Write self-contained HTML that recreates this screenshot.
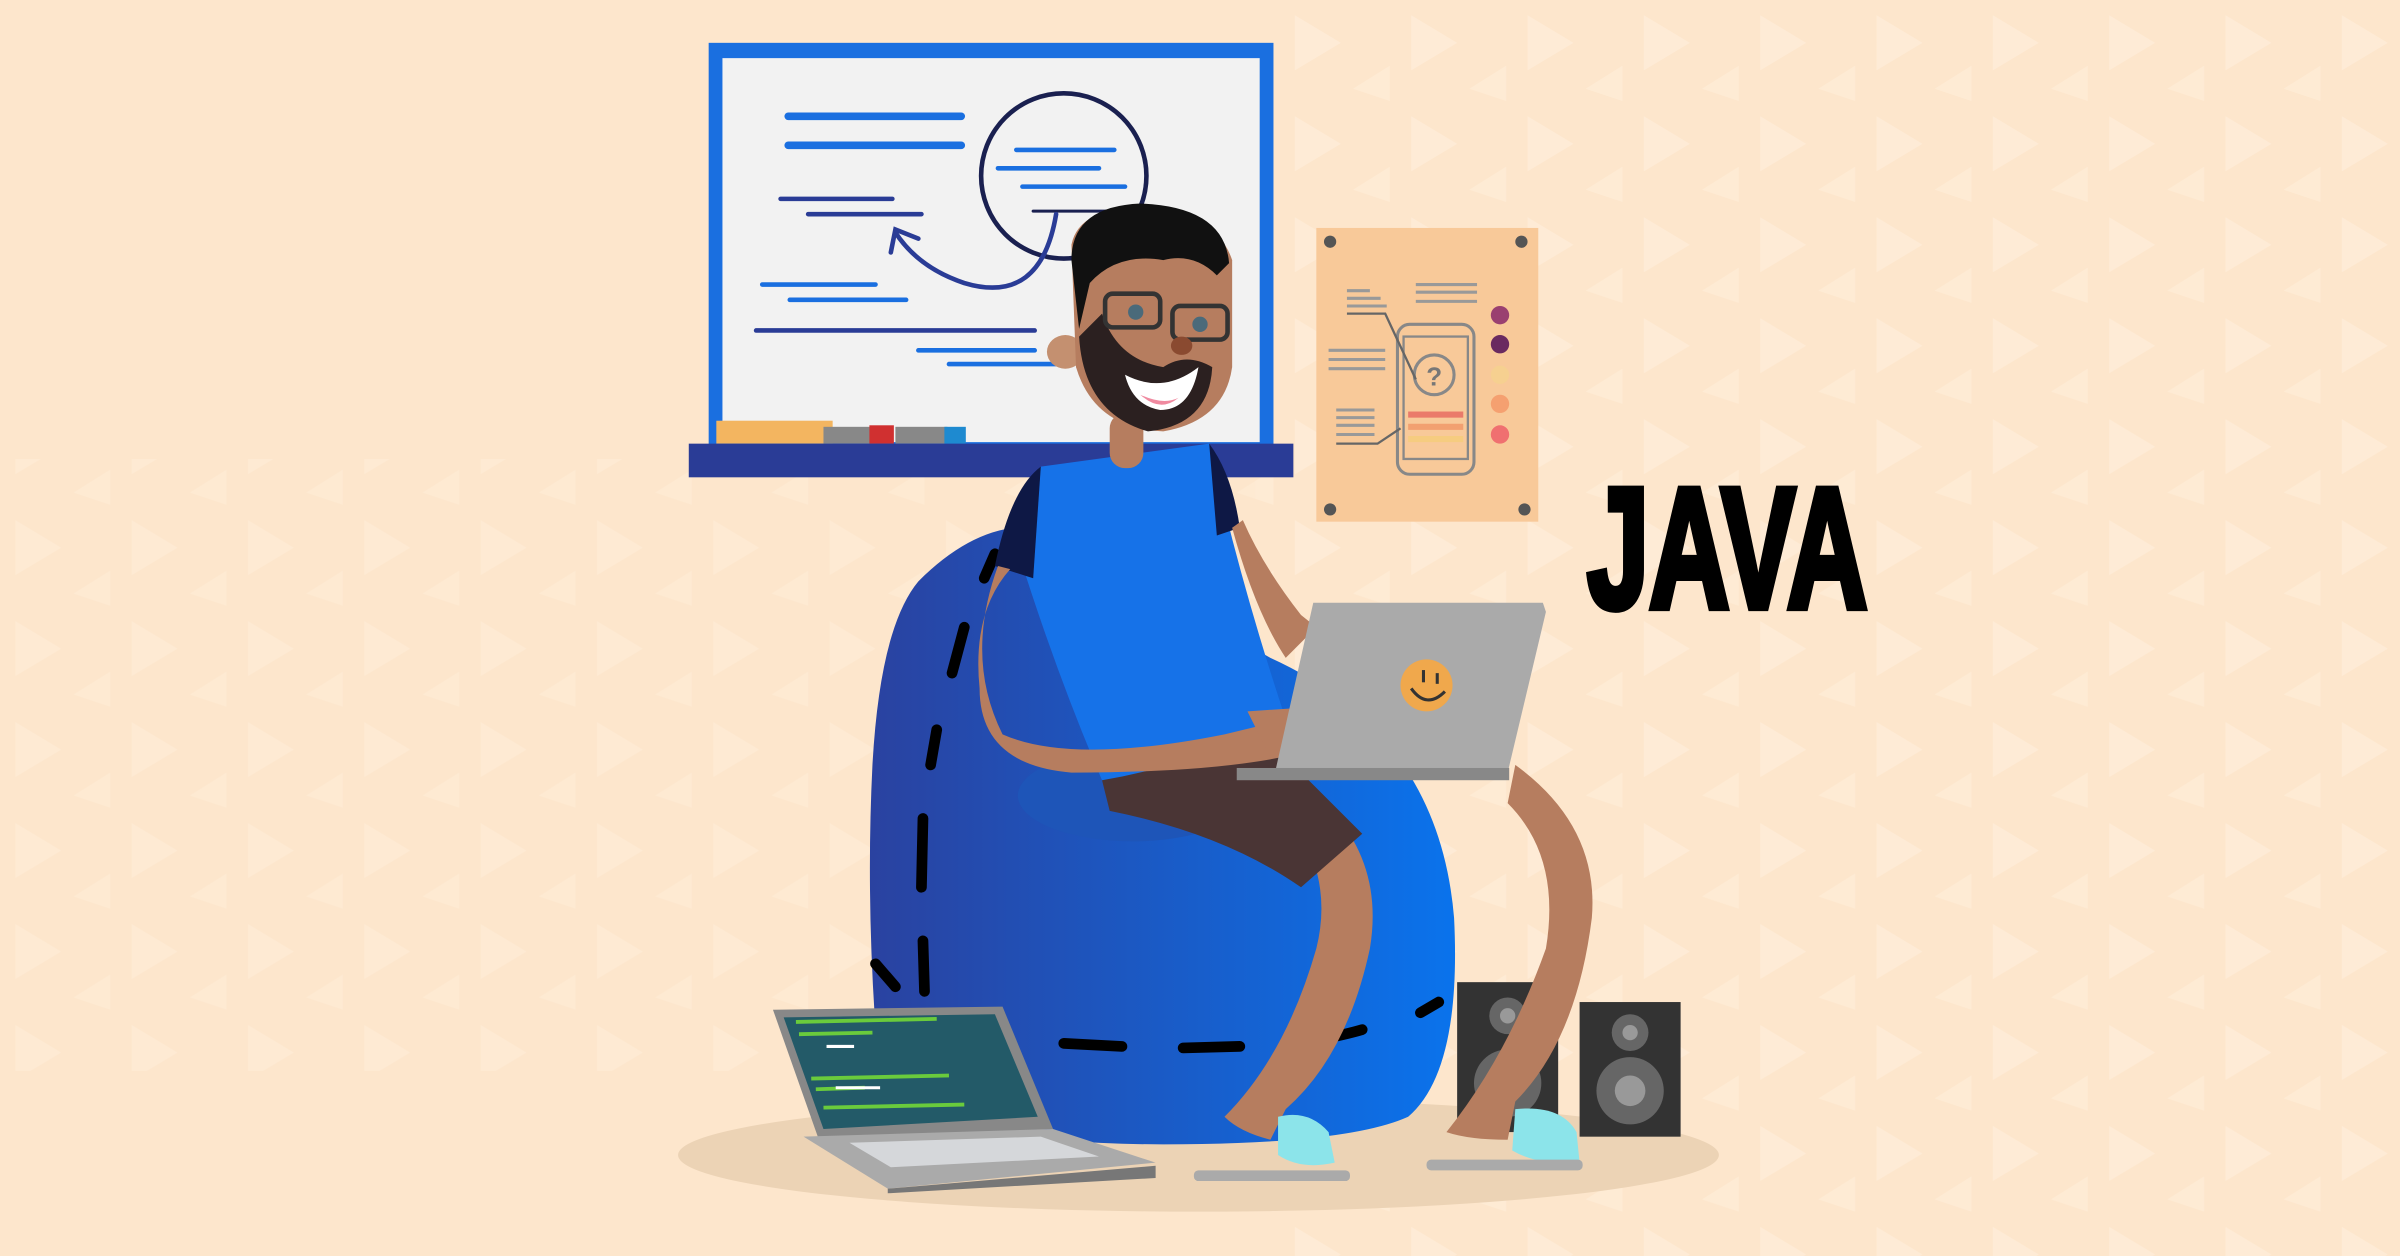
<!DOCTYPE html>
<html><head><meta charset="utf-8"><style>
html,body{margin:0;padding:0;width:2400px;height:1256px;overflow:hidden;background:#fde6cc}
svg{display:block}
.java{font-family:"Liberation Sans",Arial,sans-serif;font-weight:700}
</style></head><body>
<svg width="2400" height="1256" viewBox="0 0 1568 821" preserveAspectRatio="none" xmlns="http://www.w3.org/2000/svg">
<defs>
<pattern id="tri" width="76" height="66" patternUnits="userSpaceOnUse">
<path d="M10 10 L40 28 L10 46 Z" fill="#fff2e2" opacity="0.45"/>
<path d="M72 43 L48 58 L72 66Z" fill="#fff2e2" opacity="0.4"/>
</pattern>
<linearGradient id="bag" x1="0" x2="1" y1="0" y2="0">
<stop offset="0" stop-color="#2a42a0"/><stop offset="1" stop-color="#0a73ec"/>
</linearGradient>
</defs>
<rect width="1568" height="821" fill="#fde6cc"/>
<rect x="820" y="0" width="748" height="821" fill="url(#tri)"/>
<rect x="0" y="300" width="820" height="400" fill="url(#tri)" opacity="0.7"/>

<!-- whiteboard -->
<rect x="463" y="28" width="369" height="266" fill="#1a6fe0"/>
<rect x="472" y="38" width="351" height="251" fill="#f2f2f2"/>
<g stroke-linecap="round">
<line x1="515" y1="76" x2="628" y2="76" stroke="#1a6fe0" stroke-width="5"/>
<line x1="515" y1="95" x2="628" y2="95" stroke="#1a6fe0" stroke-width="5"/>
<circle cx="695" cy="115" r="54" fill="none" stroke="#1a2050" stroke-width="3"/>
<line x1="664" y1="98" x2="728" y2="98" stroke="#1a6fe0" stroke-width="3"/>
<line x1="652" y1="110" x2="718" y2="110" stroke="#1a6fe0" stroke-width="3"/>
<line x1="668" y1="122" x2="735" y2="122" stroke="#1a6fe0" stroke-width="3"/>
<line x1="675" y1="138" x2="735" y2="138" stroke="#1a2050" stroke-width="2"/>
<line x1="510" y1="130" x2="583" y2="130" stroke="#2a3c96" stroke-width="3"/>
<line x1="528" y1="140" x2="602" y2="140" stroke="#2a3c96" stroke-width="3"/>
<path d="M690 140 Q680 200 630 185 Q600 175 585 152" fill="none" stroke="#2a3c96" stroke-width="3"/>
<path d="M582 165 L585 150 L600 156" fill="none" stroke="#2a3c96" stroke-width="3"/>
<line x1="498" y1="186" x2="572" y2="186" stroke="#1a6fe0" stroke-width="3"/>
<line x1="516" y1="196" x2="592" y2="196" stroke="#1a6fe0" stroke-width="3"/>
<line x1="494" y1="216" x2="676" y2="216" stroke="#2a3c96" stroke-width="3"/>
<line x1="600" y1="229" x2="676" y2="229" stroke="#1a6fe0" stroke-width="3"/>
<line x1="620" y1="238" x2="690" y2="238" stroke="#1a6fe0" stroke-width="3"/>
</g>
<rect x="468" y="275" width="76" height="15" fill="#f3b560"/>
<rect x="538" y="279" width="34" height="11" fill="#888"/>
<rect x="568" y="278" width="16" height="12" fill="#d03030"/>
<rect x="585" y="279" width="34" height="11" fill="#888"/>
<rect x="617" y="279" width="14" height="11" fill="#1e8ad0"/>
<rect x="450" y="290" width="395" height="22" fill="#2a3c96"/>

<!-- poster -->
<rect x="860" y="149" width="145" height="192" fill="#f8c999"/>
<g fill="#555"><circle cx="869" cy="158" r="4"/><circle cx="994" cy="158" r="4"/><circle cx="869" cy="333" r="4"/><circle cx="996" cy="333" r="4"/></g>
<g stroke="#999" stroke-width="2">
<line x1="880" y1="190" x2="895" y2="190"/><line x1="880" y1="195" x2="902" y2="195"/><line x1="880" y1="200" x2="906" y2="200"/>
<line x1="925" y1="186" x2="965" y2="186"/><line x1="925" y1="191" x2="965" y2="191"/><line x1="925" y1="197" x2="965" y2="197"/>
<line x1="868" y1="229" x2="905" y2="229"/><line x1="868" y1="235" x2="905" y2="235"/><line x1="868" y1="241" x2="905" y2="241"/>
<line x1="873" y1="268" x2="898" y2="268"/><line x1="873" y1="273" x2="898" y2="273"/><line x1="873" y1="278" x2="898" y2="278"/><line x1="873" y1="284" x2="898" y2="284"/>
</g>
<rect x="913" y="212" width="50" height="98" rx="8" fill="none" stroke="#888" stroke-width="2"/>
<rect x="917" y="220" width="42" height="80" fill="none" stroke="#888" stroke-width="1.5"/>
<circle cx="937" cy="245" r="13" fill="none" stroke="#888" stroke-width="2"/>
<text x="937" y="252" class="java" font-size="17" fill="#777" text-anchor="middle">?</text>
<rect x="920" y="269" width="36" height="4" fill="#ea7a6a"/>
<rect x="920" y="277" width="36" height="4" fill="#f2a070"/>
<rect x="920" y="285" width="36" height="4" fill="#f6cc80"/>
<path d="M880 205 L905 205 L925 248 M873 290 L900 290 L915 280" fill="none" stroke="#666" stroke-width="1.5"/>
<circle cx="980" cy="206" r="6" fill="#9a4070"/>
<circle cx="980" cy="225" r="6" fill="#6a2a60"/>
<circle cx="980" cy="245" r="6" fill="#f6d090"/>
<circle cx="980" cy="264" r="6" fill="#f5a070"/>
<circle cx="980" cy="284" r="6" fill="#f07070"/>

<!-- JAVA -->
<text x="1037" y="397" class="java" font-size="112" fill="#000" stroke="#000" stroke-width="5" stroke-linejoin="miter" textLength="183" lengthAdjust="spacingAndGlyphs">JAVA</text>

<!-- floor -->
<ellipse cx="783" cy="755" rx="340" ry="37" fill="#ecd3b5"/>

<!-- beanbag -->
<path d="M600 380 Q640 340 680 345 L830 430 Q940 480 950 600 Q955 700 920 730 Q880 748 760 748 Q620 748 575 710 Q565 600 570 500 Q575 410 600 380Z" fill="url(#bag)"/>
<ellipse cx="740" cy="520" rx="75" ry="30" fill="#1e55b8"/>
<g stroke="#000" stroke-width="7" stroke-linecap="round" fill="none">
<line x1="650" y1="362" x2="643" y2="378"/>
<line x1="630" y1="410" x2="622" y2="440"/>
<line x1="612" y1="477" x2="608" y2="500"/>
<line x1="603" y1="535" x2="602" y2="580"/>
<line x1="603" y1="615" x2="604" y2="648"/>
<line x1="572" y1="630" x2="585" y2="645"/>
<line x1="695" y1="682" x2="733" y2="684"/>
<line x1="773" y1="685" x2="810" y2="684"/>
<path d="M860 680 Q880 676 890 673"/>
<line x1="928" y1="662" x2="940" y2="655"/>
</g>

<!-- speakers -->
<rect x="952" y="642" width="66" height="98" fill="#333"/>
<circle cx="985" cy="664" r="12" fill="#666"/><circle cx="985" cy="664" r="5" fill="#999"/>
<circle cx="985" cy="708" r="22" fill="#666"/><circle cx="985" cy="708" r="10" fill="#999"/>
<rect x="1032" y="655" width="66" height="88" fill="#333"/>
<circle cx="1065" cy="675" r="12" fill="#666"/><circle cx="1065" cy="675" r="5" fill="#999"/>
<circle cx="1065" cy="713" r="22" fill="#666"/><circle cx="1065" cy="713" r="10" fill="#999"/>

<!-- legs -->
<path d="M860 520 Q905 560 895 620 Q880 690 840 725 L830 745 Q810 740 800 730 Q840 690 860 620 Q870 580 850 545Z" fill="#b67d5f"/>
<path d="M990 500 Q1045 540 1040 600 Q1030 680 990 720 L985 745 Q960 745 945 740 Q985 690 1010 620 Q1020 560 985 525Z" fill="#b67d5f"/>
<path d="M835 730 Q855 725 868 740 L872 760 Q850 765 835 755Z" fill="#8ce4ea"/>
<path d="M990 725 Q1020 722 1030 740 L1032 760 Q1005 762 988 752Z" fill="#8ce4ea"/>
<rect x="780" y="765" width="102" height="7" rx="3" fill="#aaa"/>
<rect x="932" y="758" width="102" height="7" rx="3" fill="#aaa"/>

<!-- shorts -->
<path d="M720 510 Q760 485 840 495 L890 545 L850 580 Q800 545 725 530Z" fill="#4a3535"/>

<!-- body -->
<path d="M680 305 L790 290 Q810 380 840 470 Q780 500 720 510 Q690 440 665 360Z" fill="#1672e8"/>
<path d="M680 305 Q660 320 650 370 L675 378 Z" fill="#0e1845"/>
<path d="M790 290 Q805 310 810 345 L795 350Z" fill="#0e1845"/>
<rect x="725" y="270" width="22" height="36" rx="10" fill="#b67d5f"/>
<path d="M805 345 Q820 400 840 430 L860 410 L850 402 Q825 370 812 340Z" fill="#b67d5f"/>
<path d="M652 370 Q630 430 655 480 Q700 500 800 480 L850 468 L850 492 Q800 505 700 505 Q640 500 640 450 Q635 400 660 372Z" fill="#b67d5f"/>
<path d="M815 465 L860 462 L860 470 L855 480 L860 490 L830 495Z" fill="#b67d5f"/>

<!-- held laptop -->
<path d="M858 394 L1008 394 L1010 400 L985 505 L833 505Z" fill="#aaa"/>
<rect x="808" y="502" width="178" height="8" fill="#888"/>
<circle cx="932" cy="448" r="17" fill="#f0a84c"/>
<path d="M922 450 Q932 464 944 452" fill="none" stroke="#333" stroke-width="2"/>
<line x1="930" y1="438" x2="930" y2="446" stroke="#333" stroke-width="2"/>
<line x1="939" y1="440" x2="939" y2="447" stroke="#333" stroke-width="2"/>

<!-- head -->
<ellipse cx="696" cy="230" rx="12" ry="11" fill="#c49070"/>
<path d="M700 160 Q705 135 750 135 Q795 140 805 170 L805 240 Q800 275 760 282 Q715 280 703 240Z" fill="#b67d5f"/>
<path d="M700 170 Q700 135 745 133 Q800 135 803 172 L795 180 Q780 165 760 170 Q730 165 712 185 L705 215Z" fill="#111"/>
<path d="M705 220 Q708 270 750 282 Q790 278 792 240 Q775 230 760 240 Q730 235 720 205Z" fill="#2b2020"/>
<path d="M735 245 Q760 258 783 240 Q778 268 758 268 Q740 265 735 245Z" fill="#fff"/>
<path d="M745 258 Q758 270 770 260 Q760 265 745 258Z" fill="#f08aa0"/>
<g fill="none" stroke="#333" stroke-width="3">
<rect x="722" y="192" width="36" height="22" rx="5"/>
<rect x="766" y="200" width="36" height="22" rx="5"/>
</g>
<circle cx="742" cy="204" r="5" fill="#4a6a7a"/>
<circle cx="784" cy="212" r="5" fill="#4a6a7a"/>
<ellipse cx="772" cy="226" rx="7" ry="6" fill="#8a4a30"/>

<!-- floor laptop -->
<path d="M505 660 L655 658 L688 738 L535 745Z" fill="#888"/>
<path d="M512 665 L650 663 L678 730 L538 738Z" fill="#235a68"/>
<g stroke="#6acb3c" stroke-width="2.5">
<line x1="520" y1="668" x2="612" y2="666"/>
<line x1="522" y1="676" x2="570" y2="675"/>
<line x1="530" y1="705" x2="620" y2="703"/>
<line x1="533" y1="712" x2="565" y2="711"/>
<line x1="538" y1="724" x2="630" y2="722"/>
</g>
<g stroke="#fff" stroke-width="2"><line x1="540" y1="684" x2="558" y2="684"/><line x1="546" y1="711" x2="575" y2="711"/></g>
<path d="M525 743 L688 738 L755 760 L580 777Z" fill="#aaa"/>
<path d="M555 747 L680 743 L718 756 L582 763Z" fill="#d5d7da"/>
<path d="M580 777 L755 762 L755 770 L580 780Z" fill="#777"/>
</svg>
</body></html>
